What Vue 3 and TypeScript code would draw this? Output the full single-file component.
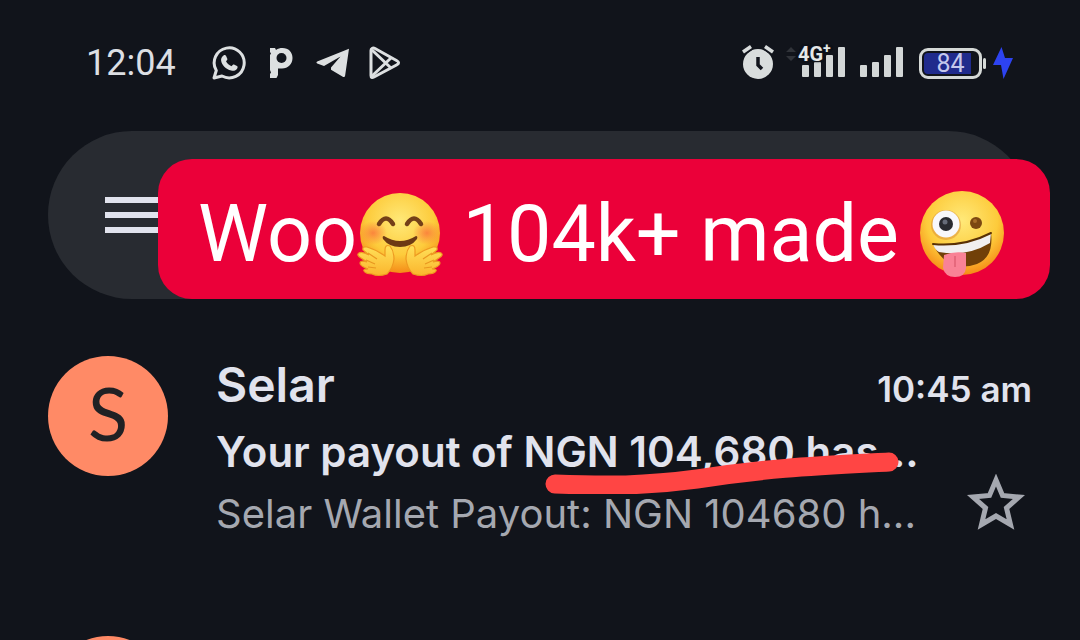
<script setup lang="ts">
interface Mail {
  sender: string
  time: string
  subject: string
  snippet: string
}

const mails: Mail[] = [
  {
    sender: 'Selar',
    time: '10:45 am',
    subject: 'Your payout of NGN 104,680 has...',
    snippet: 'Selar Wallet Payout: NGN 104680 h...',
  },
]
</script>

<template>
  <div class="screen">
    <header class="status">
      <div class="group left">
        <time class="clock">12:04</time>
        <svg class="whatsapp" width="34" height="34" viewBox="0 0 34 34">
          <path d="M2 32 4.300 24.500A15 15 0 1 1 10 30Z" fill="none" stroke="#dde0e1" stroke-width="3" stroke-linejoin="round" />
          <path d="M11.500 9.500c1-.8 2-.6 2.500.3l1.300 3c.3.800-.2 1.400-1.300 2.500 1.400 2.500 3 3.800 5.500 4.900 1.200-1.400 1.700-2 2.500-1.700l3 1.500c.9.500.7 1.600.2 2.500-1.100 2-3.600 2.800-6 2.100-5.500-1.600-9.500-5.600-10.100-10.100-.2-2 .8-4 2.400-5Z" fill="#dde0e1" />
        </svg>
        <svg class="pglyph" width="24" height="32" viewBox="0 0 24 32">
          <path d="M1 1h5l1 2C9 1.500 11 1 13.500 1 19.500 1 23.500 5 23.500 11S19 21.500 13 21.500H9V28l-1.500 3H1V27l1-1.500-1-2.500V8l1-1.500L1 5Z" fill="#dde0e1" />
          <circle cx="12.500" cy="11" r="5" fill="#12151d" />
        </svg>
        <svg class="telegram" width="34" height="30" viewBox="0 0 34 30">
          <path d="M33 .8 1.200 13.500c-1 .5-1 1.400 0 1.900L8 18l16.500-9.500L15 19.500v2.300l11.800 7c1.200.6 2 .2 2.300-1Z" fill="#dde0e1" />
        </svg>
        <svg width="32" height="34" viewBox="0 0 32 34">
          <g fill="none" stroke="#dde0e1" stroke-width="3" stroke-linejoin="round">
            <path d="M3 2.500c-1 .5-1 1-1 2v25c0 2 1 2.500 3 1.500l22.500-12c2.800-1.500 2.800-3 0-4.500L6 2.500c-1.300-.7-2-.7-3 0Z" />
            <path d="m3 4 19.500 18.500M3 30 22.500 11.500" stroke-width="3" />
          </g>
        </svg>
      </div>

      <div class="group right">
        <svg width="34" height="36" viewBox="0 0 34 36">
          <circle cx="17" cy="19" r="15" fill="#d9dddd" />
          <path d="m2 7 8-5.500M32 7l-8-5.500" stroke="#12151d" stroke-width="7" />
          <path d="m2 7 8-5.500M32 7l-8-5.500" stroke="#d9dddd" stroke-width="3.500" />
          <path d="M17 12v8l4 4" fill="none" stroke="#12151d" stroke-width="3.500" />
        </svg>
        <div class="network">
          <svg class="arrows" width="10" height="14" viewBox="0 0 10 14">
            <path d="m0 5 5-5 5 5ZM0 9l5 5 5-5Z" fill="#303339" />
          </svg>
          <svg class="bars" width="44" height="32" viewBox="0 0 44 32">
            <g fill="#d3d7d7">
              <rect y="18" width="7" height="12" rx="1" /><rect x="12" y="15" width="7" height="15" rx="1" />
              <rect x="24" y="8" width="7" height="22" rx="1" /><rect x="36" width="7" height="30" rx="1" />
            </g>
          </svg>
          <span class="generation">4G<sup>+</sup></span>
        </div>
        <svg class="bars" width="44" height="32" viewBox="0 0 44 32">
          <g fill="#d3d7d7">
            <rect y="18" width="7" height="12" rx="1" /><rect x="12" y="15" width="7" height="15" rx="1" />
            <rect x="24" y="8" width="7" height="22" rx="1" /><rect x="36" width="7" height="30" rx="1" />
          </g>
        </svg>
        <div class="battery"><span class="charge">84</span></div>
        <svg class="bolt" width="20" height="32" viewBox="0 0 20 32">
          <path d="M8.500 0 0 18h8L10.500 32 20 11h-8Z" fill="#2d43f0" />
        </svg>
      </div>
    </header>

    <div class="search">
      <button class="menu" aria-label="Open menu"><i></i><i></i><i></i></button>
      <div class="banner">
        <span>Woo</span>
        <svg class="emoji" viewBox="0 0 86 86" role="img" aria-label="Hugging face">
          <defs>
            <radialGradient id="face" cx="50%" cy="35%" r="65%">
              <stop offset="0" stop-color="#ffe979" /><stop offset=".65" stop-color="#fdcb3b" /><stop offset="1" stop-color="#f58b17" />
            </radialGradient>
            <radialGradient id="blush"><stop offset="0" stop-color="#fa743b" stop-opacity=".8" /><stop offset="1" stop-color="#fa743b" stop-opacity="0" /></radialGradient>
            <linearGradient id="hand" x1="0" y1="0" x2="0" y2="1"><stop offset="0" stop-color="#ffe15a" /><stop offset="1" stop-color="#fbb52d" /></linearGradient>
          </defs>
          <circle cx="43" cy="42" r="40" fill="url(#face)" />
          <ellipse cx="16" cy="42" rx="14" ry="12" fill="url(#blush)" />
          <ellipse cx="70" cy="42" rx="14" ry="12" fill="url(#blush)" />
          <path d="M22 33q7-11 14 0M50 33q7-11 14 0" fill="none" stroke="#744018" stroke-width="4.500" stroke-linecap="round" />
          <path d="M27 45q16 10 32 0 2 0 1 3-6 8-17 8t-17-8q-1-3 1-3Z" fill="#6d3914" />
          <g>
            <path d="M30 83q6-6 7-15 0-8-4-13-5-2-5 4l0 6q-8-6-18-9-5-1-4 3l6 5q-7-4-10-2t2 5l6 4q-7-2-7 1t8 6q-5 0-4 2 2 3 8 3 6 3 15 0Z" fill="url(#hand)" stroke="#ee9a21" stroke-width="1.200" />
            <path d="m11 62 9 6M9 69l9 4M11 76l8 1" stroke="#e99720" stroke-width="1.200" fill="none" />
          </g>
          <g transform="matrix(-1 0 0 1 86 0)">
            <path d="M30 83q6-6 7-15 0-8-4-13-5-2-5 4l0 6q-8-6-18-9-5-1-4 3l6 5q-7-4-10-2t2 5l6 4q-7-2-7 1t8 6q-5 0-4 2 2 3 8 3 6 3 15 0Z" fill="url(#hand)" stroke="#ee9a21" stroke-width="1.200" />
            <path d="m11 62 9 6M9 69l9 4M11 76l8 1" stroke="#e99720" stroke-width="1.200" fill="none" />
          </g>
        </svg>
        <span>&nbsp;104k+ made&nbsp;</span>
        <svg class="emoji" viewBox="0 0 86 86" role="img" aria-label="Zany face">
          <circle cx="43" cy="42" r="42" fill="url(#face)" />
          <circle cx="27" cy="34" r="15" fill="#d98b34" opacity=".5" />
          <circle cx="27" cy="33" r="13.500" fill="#f8f8fb" />
          <circle cx="27" cy="33" r="7" fill="#292a30" /><circle cx="26" cy="31" r="2.500" fill="#666b78" />
          <circle cx="57" cy="32" r="6" fill="#7c4711" /><circle cx="56" cy="30" r="2" fill="#a76c28" />
          <path d="M14 53Q45 56 72 42q3 24-14 31Q28 83 14 53Z" fill="#714008" />
          <path d="M14 53Q45 56 72 42l-1 10Q48 66 20 61Q16 59 14 53Z" fill="#f1eff0" />
          <path d="M14 53Q45 56 72 42" fill="none" stroke="#593005" stroke-width="2" stroke-linecap="round" />
          <path d="M25 64q10-4 22-2v15q-1 9-11 9t-12-9Z" fill="#f98296" />
          <path d="M36 65v11" stroke="#df6074" stroke-width="1.500" />
        </svg>
      </div>
    </div>

    <main class="inbox">
      <article v-for="mail in mails" :key="mail.time" class="mail">
        <div class="avatar">S</div>
        <div class="content">
          <div class="heading">
            <h2>{{ mail.sender }}</h2>
            <time>{{ mail.time }}</time>
          </div>
          <p class="subject">
            {{ mail.subject }}
            <svg class="marker" width="354" height="44" viewBox="0 0 354 44" aria-hidden="true">
              <path d="M10 34C62 36 100 36 152 29C222 18 270 16 344 12" fill="none" stroke="#ff4544" stroke-width="19" stroke-linecap="round" />
            </svg>
          </p>
          <div class="preview">
            <p>{{ mail.snippet }}</p>
            <button class="star" aria-label="Star message">
              <svg width="60" height="58" viewBox="0 0 60 58">
                <path d="M30 6 36.500 21.500 53 23 40.500 34 44.500 50.500 30 42 15.500 50.500 19.500 34 7 23 23.500 21.500Z" fill="none" stroke="#a5a8b0" stroke-width="5" />
              </svg>
            </button>
          </div>
        </div>
      </article>
      <article class="mail"><div class="avatar"></div></article>
    </main>
  </div>
</template>

<style>
body { background: #11141b; }
</style>

<style scoped>
.screen {
  box-sizing: border-box;
  height: 100vh;
  overflow: hidden;
  padding: 40px 48px 0;
  background: #11141b;
  color: #e1e3ed;
  font-family: Inter, "Noto Sans", sans-serif;
}
.status, .group, .network, .battery, .search, .banner, .mail, .heading, .preview { display: flex; align-items: center; }
.status { justify-content: space-between; height: 46px; padding: 0 19px 0 38px; }
.clock { width: 126px; font: 36px/46px Roboto, sans-serif; color: #dcdfe3; }
.whatsapp { margin-right: 23px; }
.pglyph { margin-right: 23px; }
.telegram { margin-right: 19px; }
.network { position: relative; margin-left: 11px; }
.arrows { margin-right: 6px; align-self: flex-start; }
.network .bars { margin-right: 14px; }
.generation {
  position: absolute;
  left: 12px;
  top: -4px;
  font: 700 20px/20px Roboto, sans-serif;
  color: #e5e8e8;
  text-shadow: 0 0 2px #11141b, 0 0 2px #11141b, 0 0 2px #11141b, 0 0 3px #11141b;
}
.generation sup { font-size: 14px; line-height: 10px; }
.battery {
  position: relative;
  box-sizing: border-box;
  width: 63px;
  height: 31px;
  margin-left: 15px;
  padding: 2px;
  border: 3px solid #d5d9d7;
  border-radius: 9px;
}
.battery::after { content: ""; position: absolute; right: -7px; width: 3px; height: 11px; background: #d5d9d7; border-radius: 2px; }
.charge {
  width: 100%;
  background: linear-gradient(90deg, #202b8c 88%, #11141b 88%);
  border-radius: 4px;
  text-align: center;
  font: 25px/21px Roboto, sans-serif;
  color: #c5c8ec;
}
.bolt { margin-left: 11px; }
.search { position: relative; height: 168px; margin-top: 45px; border-radius: 84px; background: #282b31; }
.menu { display: grid; gap: 9px; width: 72px; margin-left: 57px; padding: 0; border: 0; background: none; }
.menu i { height: 6px; background: #e1e3ed; }
.banner {
  position: absolute;
  box-sizing: border-box;
  left: 110px;
  right: -18px;
  top: 28px;
  height: 140px;
  padding: 10px 40px 0;
  border-radius: 34px;
  background: #eb0039;
  color: #fff;
  font: 79px/130px Roboto, sans-serif;
  white-space: nowrap;
}
.emoji { flex: none; width: 86px; height: 86px; }
.inbox { display: grid; gap: 90px; margin-top: 57px; }
.mail { align-items: flex-start; gap: 48px; min-height: 190px; }
.avatar {
  flex: none;
  width: 120px;
  height: 120px;
  border-radius: 50%;
  background: #ff8a66;
  color: #202124;
  text-align: center;
  font: 74px/114px Lato, sans-serif;
}
.content { flex: 1; min-width: 0; }
.heading { justify-content: space-between; align-items: baseline; height: 64px; }
h2, p { margin: 0; font-weight: 400; white-space: nowrap; }
h2 { font-size: 48px; line-height: 58px; font-weight: 600; }
.heading time { font-size: 35px; font-weight: 600; }
.subject { position: relative; font-size: 42px; line-height: 64px; font-weight: 600; }
.marker { position: absolute; left: 329px; top: 30px; }
.preview { justify-content: space-between; align-items: flex-start; height: 60px; color: #a5a8b0; font-size: 40px; line-height: 60px; }
.star { margin-top: -10px; padding: 0 6px 0 0; border: 0; background: none; }
.star svg { display: block; }
</style>
